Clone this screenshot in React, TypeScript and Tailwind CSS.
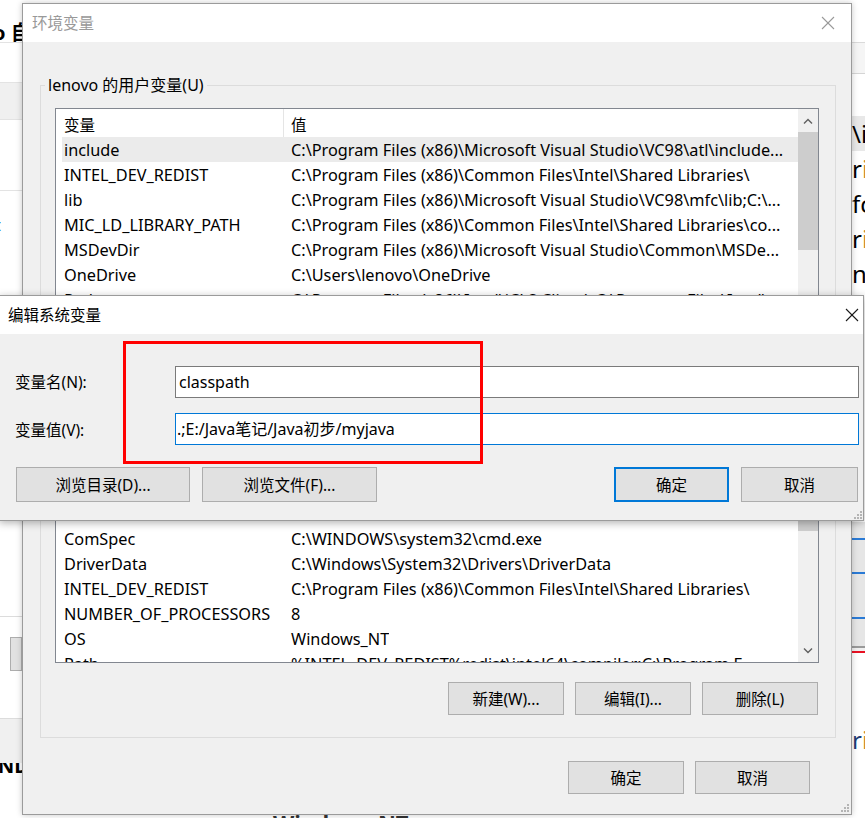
import React from "react";

const FONT = "font-['Noto_Sans','Noto_Sans_CJK_SC',sans-serif]";

type Row = [string, string];

const USER_VARS: Row[] = [
  ["include", "C:\\Program Files (x86)\\Microsoft Visual Studio\\VC98\\atl\\include..."],
  ["INTEL_DEV_REDIST", "C:\\Program Files (x86)\\Common Files\\Intel\\Shared Libraries\\"],
  ["lib", "C:\\Program Files (x86)\\Microsoft Visual Studio\\VC98\\mfc\\lib;C:\\..."],
  ["MIC_LD_LIBRARY_PATH", "C:\\Program Files (x86)\\Common Files\\Intel\\Shared Libraries\\co..."],
  ["MSDevDir", "C:\\Program Files (x86)\\Microsoft Visual Studio\\Common\\MSDe..."],
  ["OneDrive", "C:\\Users\\lenovo\\OneDrive"],
  ["Path", "C:\\Program Files (x86)\\Intel\\iCLS Client\\;C:\\Program Files\\Intel\\..."],
  ["TEMP", "%USERPROFILE%\\AppData\\Local\\Temp"],
  ["TMP", "%USERPROFILE%\\AppData\\Local\\Temp"],
];

const SYSTEM_VARS: Row[] = [
  ["ACSetupSvcPort", "23210"],
  ["ACSvcPort", "17532"],
  ["ComSpec", "C:\\WINDOWS\\system32\\cmd.exe"],
  ["DriverData", "C:\\Windows\\System32\\Drivers\\DriverData"],
  ["INTEL_DEV_REDIST", "C:\\Program Files (x86)\\Common Files\\Intel\\Shared Libraries\\"],
  ["NUMBER_OF_PROCESSORS", "8"],
  ["OS", "Windows_NT"],
  ["Path", "%INTEL_DEV_REDIST%redist\\intel64\\compiler;C:\\Program F..."],
  ["PATHEXT", ".COM;.EXE;.BAT;.CMD;.VBS;.VBE;.JS;.JSE;.WSF;.WSH;.MSC"],
];

function Chevron({ up }: { up?: boolean }) {
  return (
    <svg width="10" height="6" viewBox="0 0 10 6" fill="none" stroke="#606060" strokeWidth="1.4">
      {up ? <polyline points="1,5.5 5,1.5 9,5.5" /> : <polyline points="1,0.5 5,4.5 9,0.5" />}
    </svg>
  );
}

function CloseIcon({ color }: { color: string }) {
  return (
    <svg width="14" height="14" viewBox="0 0 14 14" stroke={color} strokeWidth="1.1">
      <line x1="1" y1="1" x2="13" y2="13" />
      <line x1="13" y1="1" x2="1" y2="13" />
    </svg>
  );
}

function Grip() {
  const dots = [
    [8, 0],
    [5, 3],
    [8, 3],
    [2, 6],
    [5, 6],
    [8, 6],
  ];
  return (
    <svg width="10" height="8" viewBox="0 0 10 8" fill="#b4b4b4">
      {dots.map(([x, y]) => (
        <rect key={`${x}-${y}`} x={x} y={y} width="2" height="2" />
      ))}
    </svg>
  );
}

function WinButton({
  children,
  className,
  primary,
}: {
  children: React.ReactNode;
  className: string;
  primary?: boolean;
}) {
  return (
    <div
      className={`flex shrink-0 items-center justify-center bg-[#e1e1e1] text-[15.5px] leading-[20px] text-black ${
        primary ? "border-2 border-[#0078d7]" : "border border-[#adadad]"
      } ${className}`}
    >
      {children}
    </div>
  );
}

function ListBox({
  rows,
  heightClass,
  thumbClass,
  selected,
}: {
  rows: Row[];
  heightClass: string;
  thumbClass: string;
  selected?: number;
}) {
  return (
    <div className={`flex overflow-hidden border border-[#828790] bg-white ${heightClass}`}>
      <div className="flex min-w-0 flex-1 flex-col leading-[20px] text-black">
        <div className="flex h-[28px] shrink-0 text-[15.5px]">
          <div className="flex w-[228px] shrink-0 items-center border-r border-[#e5e5e5] pl-[8px] pt-[4px]">
            变量
          </div>
          <div className="flex items-center pl-[7px] pt-[4px]">值</div>
        </div>
        {rows.map(([name, value], i) => (
          <div
            key={name + i}
            className={`ml-[6px] flex h-[25px] shrink-0 items-center whitespace-nowrap text-[16.3px] ${
              i === selected ? "bg-[#ebebeb]" : ""
            }`}
          >
            <div className="w-[227px] shrink-0 overflow-hidden pl-[2px]">{name}</div>
            <div className="overflow-hidden pl-[2px]">{value}</div>
          </div>
        ))}
      </div>
      <div className="flex w-[20px] shrink-0 flex-col bg-[#f0f0f0]">
        <div className="flex h-[23px] shrink-0 items-center justify-center">
          <Chevron up />
        </div>
        <div className={`shrink-0 bg-[#cdcdcd] ${thumbClass}`} />
        <div className="flex-1" />
        <div className="flex h-[23px] shrink-0 items-center justify-center">
          <Chevron />
        </div>
      </div>
    </div>
  );
}

function LeftStrip() {
  return (
    <div className="flex w-[22px] shrink-0 flex-col overflow-hidden">
      <div className="h-[43px] overflow-hidden whitespace-nowrap border-b border-[#e3e3e3] pt-[22px] text-[20px] font-bold leading-[22px] text-black">
        <div className="-ml-[7px]">o 自</div>
      </div>
      <div className="h-[39px] shrink-0" />
      <div className="h-[38px] shrink-0 border-y border-[#e3e3e3] bg-[#f0f0f0]" />
      <div className="h-[70px] shrink-0" />
      <div className="h-[1px] shrink-0 bg-[#e3e3e3]" />
      <div className="mt-[24px] h-[20px] shrink-0 overflow-hidden whitespace-nowrap text-[16px] leading-[20px] text-[#0a64c8]">
        <div className="-ml-[5px]">t</div>
      </div>
      <div className="mt-[381px] h-[1px] shrink-0 bg-[#dcdcdc]" />
      <div className="ml-[10px] mt-[20px] h-[34px] shrink-0 border border-[#adadad] bg-[#e1e1e1]" />
      <div className="mt-[47px] h-[45px] shrink-0 border-t border-[#dcdcdc] bg-[#f0f0f0]" />
      <div className="h-[22px] shrink-0 overflow-hidden whitespace-nowrap text-[20px] font-bold leading-[22px] text-black">
        <div className="-mt-[8px] -ml-[2px]">ND</div>
      </div>
    </div>
  );
}

function RightStrip() {
  const words: [string, string, boolean][] = [
    ["\\", "i", false],
    ["r", "i", true],
    ["f", "c", false],
    ["r", "i", true],
    ["n", "V", false],
  ];
  return (
    <div className="flex w-[14px] shrink-0 flex-col overflow-hidden">
      <div className="h-[43px] shrink-0 border-b border-[#dadada]" />
      <div className="h-[31px] shrink-0 border-b border-[#d5d5d5] bg-[#f5f5f5]" />
      <div className="h-[42px] shrink-0" />
      {words.map(([a, b, warm], i) => (
        <div
          key={i}
          className={`h-[35px] shrink-0 whitespace-nowrap pl-[1px] text-[24px] leading-[35px] text-black ${
            i === 0 ? "bg-[#e8e8e8]" : ""
          }`}
        >
          {a}
          <span className={warm ? "text-[#c98a2e]" : ""}>{b}</span>
        </div>
      ))}
      <div className="mt-[231px] flex shrink-0 flex-col bg-[#e6e6e6]">
        <div className="h-[16px]" />
        <div className="h-[2px] bg-[#2a7ad5]" />
        <div className="h-[32px]" />
        <div className="h-[2px] bg-[#2a7ad5]" />
        <div className="h-[43px]" />
        <div className="h-[2px] bg-[#2a7ad5]" />
        <div className="h-[27px]" />
        <div className="h-[2px] bg-[#9a9a9a]" />
        <div className="h-[3px] bg-[#f0f0f0]" />
        <div className="h-[2px] bg-[#e81123]" />
      </div>
      <div className="mt-[70px] h-[34px] shrink-0 whitespace-nowrap pl-[1px] text-[24px] leading-[34px] text-[#1f3b73]">
        r<span className="text-[#c98a2e]">i</span>
      </div>
    </div>
  );
}

function EnvDialog() {
  return (
    <div className="absolute left-[22px] top-[3px] flex h-[812px] w-[830px] flex-col border border-[#9b9b9b] bg-[#f0f0f0] shadow-[0_0_6px_rgba(0,0,0,0.22)]">
      <div className="flex h-[38px] shrink-0 items-center justify-between bg-white pl-[9px] pr-[16px]">
        <span className="text-[15.5px] leading-[20px] text-[#999999]">环境变量</span>
        <CloseIcon color="#9a9a9a" />
      </div>

      <fieldset className="ml-[17px] mr-[15px] mt-[32px] border border-[#dcdcdc]">
        <legend className="ml-[4px] px-[3px] text-[16px] leading-[22px] text-black">
          lenovo 的用户变量(U)
        </legend>
        <div className="pb-[22px] pl-[14px] pr-[16px]">
          <div className="mt-[12px]">
            <ListBox rows={USER_VARS} heightClass="h-[217px]" thumbClass="h-[118px]" selected={0} />
          </div>
          <div className="mt-[19px] flex justify-end gap-[11px] pr-[1px]">
            <WinButton className="h-[33px] w-[116px]">新建(N)...</WinButton>
            <WinButton className="h-[33px] w-[116px]">编辑(E)...</WinButton>
            <WinButton className="h-[33px] w-[116px]">删除(D)</WinButton>
          </div>
        </div>
      </fieldset>

      <fieldset className="ml-[17px] mr-[15px] mt-[14px] border border-[#dcdcdc]">
        <legend className="ml-[4px] px-[3px] text-[15.5px] leading-[22px] text-black">系统变量(S)</legend>
        <div className="pb-[22px] pl-[14px] pr-[16px]">
          <div className="mt-[11px]">
            <ListBox rows={SYSTEM_VARS} heightClass="h-[216px]" thumbClass="h-[60px]" />
          </div>
          <div className="mt-[19px] flex justify-end gap-[11px] pr-[1px]">
            <WinButton className="h-[33px] w-[116px]">新建(W)...</WinButton>
            <WinButton className="h-[33px] w-[116px]">编辑(I)...</WinButton>
            <WinButton className="h-[33px] w-[116px]">删除(L)</WinButton>
          </div>
        </div>
      </fieldset>

      <div className="mt-[23px] flex justify-end gap-[11px] pr-[41px]">
        <WinButton className="h-[33px] w-[116px]">确定</WinButton>
        <WinButton className="h-[33px] w-[115px]">取消</WinButton>
      </div>

      <div className="absolute bottom-[2px] right-[2px]">
        <Grip />
      </div>
    </div>
  );
}

function EditDialog() {
  return (
    <div className="absolute left-[-1px] top-[295px] flex h-[226px] w-[865px] flex-col border border-[#9b9b9b] bg-[#f0f0f0] shadow-[0_2px_8px_rgba(0,0,0,0.3)]">
      <div className="flex h-[38px] shrink-0 items-center justify-between bg-white pl-[8px] pr-[4px]">
        <span className="text-[15.5px] leading-[20px] text-black">编辑系统变量</span>
        <CloseIcon color="#1a1a1a" />
      </div>
      <div className="flex flex-1 flex-col pt-[32px] text-[15.5px] leading-[20px] text-black">
        <div className="flex h-[32px] items-center">
          <div className="w-[175px] shrink-0 pl-[15px]">变量名(N):</div>
          <div className="flex h-[32px] w-[684px] items-center border border-[#7a7a7a] bg-white pl-[3px] text-[16px]">
            classpath
          </div>
        </div>
        <div className="mt-[15px] flex h-[32px] items-center">
          <div className="w-[175px] shrink-0 pl-[15px] pt-[2px]">变量值(V):</div>
          <div className="flex h-[32px] w-[684px] items-center border border-[#0078d7] bg-white pl-[1px] text-[16px]">
            .;E:/Java笔记/Java初步/myjava
          </div>
        </div>
        <div className="mt-[22px] flex h-[35px]">
          <WinButton className="ml-[16px] h-[35px] w-[174px]">浏览目录(D)...</WinButton>
          <WinButton className="ml-[12px] h-[35px] w-[175px]">浏览文件(F)...</WinButton>
          <WinButton primary className="ml-auto h-[35px] w-[115px]">
            确定
          </WinButton>
          <WinButton className="ml-[12px] mr-[5px] h-[35px] w-[117px]">取消</WinButton>
        </div>
      </div>
      <div className="absolute bottom-[1px] right-[1px]">
        <Grip />
      </div>
    </div>
  );
}

export default function App() {
  return (
    <div className={`relative h-[818px] w-[865px] overflow-hidden bg-white ${FONT}`}>
      <div className="flex h-full">
        <LeftStrip />
        <div className="flex min-w-0 flex-1 flex-col justify-end">
          <div className="h-[3px] overflow-hidden whitespace-nowrap pl-[251px]">
            <div className="-mt-[4px] text-[22px] font-bold leading-[22px] text-[#333333]">Windows NT</div>
          </div>
        </div>
        <RightStrip />
      </div>

      <EnvDialog />
      <EditDialog />

      <div className="absolute left-[123px] top-[341px] h-[123px] w-[360px] border-[3px] border-[#ff0000]" />
    </div>
  );
}
